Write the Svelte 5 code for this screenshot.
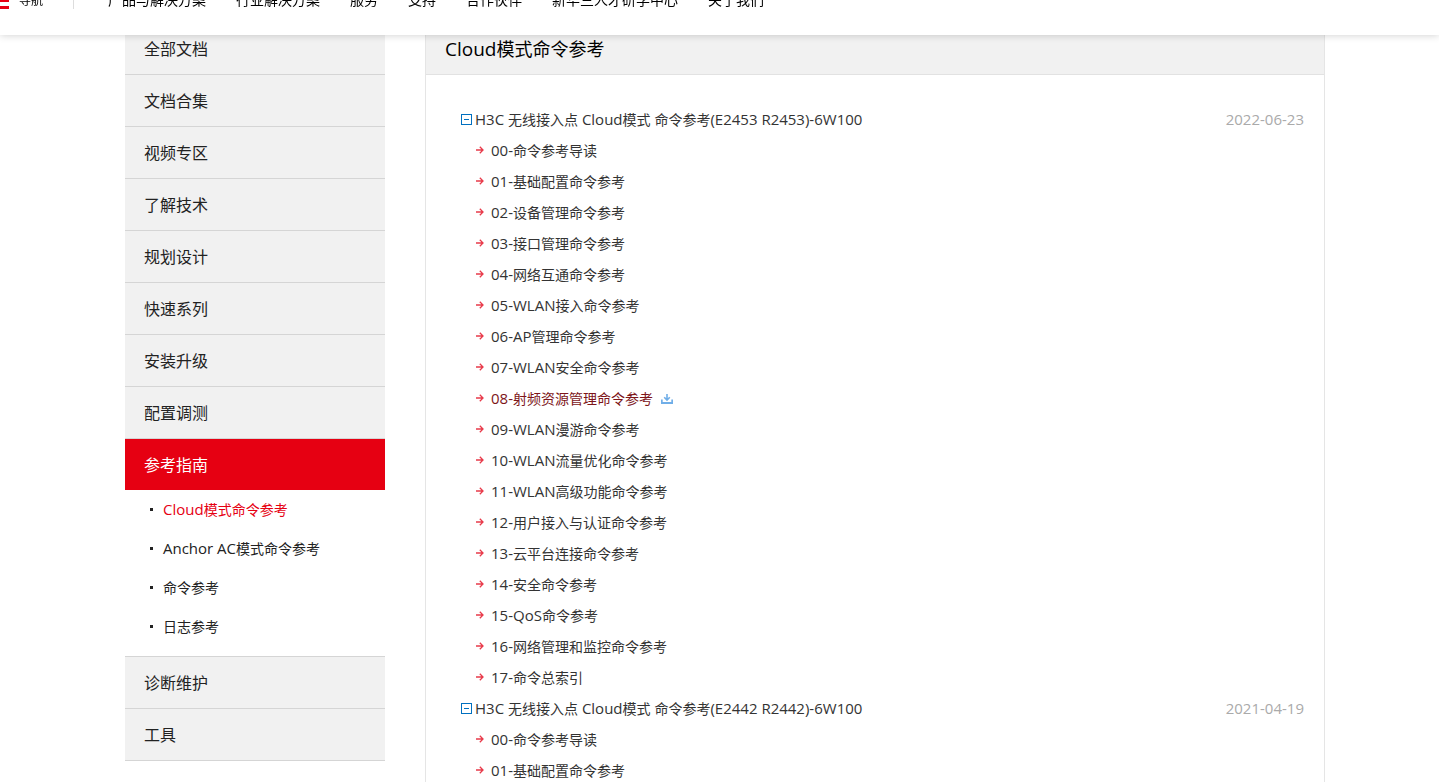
<script>
  const nav = ['产品与解决方案', '行业解决方案', '服务', '支持', '合作伙伴', '新华三人才研学中心', '关于我们'];

  const before = ['全部文档', '文档合集', '视频专区', '了解技术', '规划设计', '快速系列', '安装升级', '配置调测'];
  const sub = ['Cloud模式命令参考', 'Anchor AC模式命令参考', '命令参考', '日志参考'];
  const after = ['诊断维护', '工具'];

  const groups = $state([
    {
      title: 'H3C 无线接入点 Cloud模式 命令参考(E2453 R2453)-6W100',
      date: '2022-06-23',
      open: true,
      items: [
        '00-命令参考导读',
        '01-基础配置命令参考',
        '02-设备管理命令参考',
        '03-接口管理命令参考',
        '04-网络互通命令参考',
        '05-WLAN接入命令参考',
        '06-AP管理命令参考',
        '07-WLAN安全命令参考',
        '08-射频资源管理命令参考',
        '09-WLAN漫游命令参考',
        '10-WLAN流量优化命令参考',
        '11-WLAN高级功能命令参考',
        '12-用户接入与认证命令参考',
        '13-云平台连接命令参考',
        '14-安全命令参考',
        '15-QoS命令参考',
        '16-网络管理和监控命令参考',
        '17-命令总索引'
      ],
      active: 8
    },
    {
      title: 'H3C 无线接入点 Cloud模式 命令参考(E2442 R2442)-6W100',
      date: '2021-04-19',
      open: true,
      items: ['00-命令参考导读', '01-基础配置命令参考'],
      active: -1
    }
  ]);

  // Splits a label into Chinese and Latin runs, so that Latin can be set a size larger.
  const runs = (text) =>
    text.match(/[\u4e00-\u9fff]+|[^\u4e00-\u9fff]+/g).map((part) => ({ part, latin: part.charCodeAt(0) < 256 }));
</script>

{#snippet mixed(text)}{#each runs(text) as run}{#if run.latin}<span class="latin">{run.part}</span>{:else}{run.part}{/if}{/each}{/snippet}

<div class="page">
  <header>
    <button class="menu">
      <svg width="18" height="17" viewBox="0 0 18 17" aria-hidden="true">
        <path d="M0 1.5h18M0 8.5h18M0 15.5h18" stroke="#e60012" stroke-width="3" />
      </svg>
      导航
    </button>
    <nav>
      {#each nav as label}
        <a href="#top">{label}</a>
      {/each}
    </nav>
  </header>

  <div class="layout">
    <aside>
      <ul class="side">
        {#each before as label}
          <li><a class="entry" href="#top">{label}</a></li>
        {/each}
        <li>
          <a class="entry current" href="#top">参考指南</a>
          <ul class="sub">
            {#each sub as label, i}
              <li><a href="#top" class:on={i === 0}>{@render mixed(label)}</a></li>
            {/each}
          </ul>
        </li>
        {#each after as label}
          <li><a class="entry" href="#top">{label}</a></li>
        {/each}
      </ul>
    </aside>

    <main>
      <h1>{@render mixed('Cloud模式命令参考')}</h1>
      <div class="docs">
        {#each groups as group}
          <section>
            <div class="row head">
              <button class="toggle" aria-label={group.title} aria-expanded={group.open} onclick={() => (group.open = !group.open)}>
                <svg width="11" height="11" viewBox="0 0 11 11" shape-rendering="crispEdges">
                  <path d="M.5.5h10v10h-10zM3 5.5h5" fill="none" stroke="#0070c0" />
                  {#if !group.open}<path d="M5.5 3v5" stroke="#0070c0" />{/if}
                </svg>
              </button>
              <a href="#top">{@render mixed(group.title)}</a>
              <time class="latin">{group.date}</time>
            </div>
            {#if group.open}
              <ul>
                {#each group.items as item, i}
                  <li class="row item">
                    <svg width="8" height="9" viewBox="0 0 8 9" aria-hidden="true">
                      <path d="M0 4h7M3.8 .8l3.2 3.2L3.8 7.2" fill="none" stroke="#e83a4a" stroke-width="1.3" />
                    </svg>
                    <a href="#top" class:visited={i === group.active}>{@render mixed(item)}</a>
                    {#if i === group.active}
                      <button class="download" aria-label="下载">
                        <svg width="12" height="10" viewBox="0 0 12 10">
                          <path d="M6 0v5.5M3.2 3.2L6 6l2.8-2.8" fill="none" stroke="#70aee8" stroke-width="1.6" />
                          <path d="M.8 5.5V9h10.4V5.5" fill="none" stroke="#70aee8" stroke-width="1.8" />
                        </svg>
                      </button>
                    {/if}
                  </li>
                {/each}
              </ul>
            {/if}
          </section>
        {/each}
      </div>
    </main>
  </div>
</div>

<style>
  :global(body) {
    margin: 0;
    background: #fff;
  }
  .page {
    height: 100vh;
    overflow: hidden;
    font-family: 'Open Sans', 'Noto Sans CJK SC', sans-serif;
    font-size: 14px;
    color: #222;
  }
  a {
    color: inherit;
    text-decoration: none;
  }
  ul {
    list-style: none;
    margin: 0;
    padding: 0;
  }
  button {
    border: 0;
    padding: 0;
    background: none;
    font: inherit;
    color: inherit;
    cursor: pointer;
  }
  svg {
    display: block;
    flex: none;
  }
  header {
    position: fixed;
    top: -37px;
    left: 0;
    right: 0;
    z-index: 2;
    display: flex;
    align-items: center;
    height: 72px;
    background: #fff;
    box-shadow: 0 0 8px rgba(0, 0, 0, 0.2);
    color: #000;
    white-space: nowrap;
  }
  .menu {
    display: flex;
    align-items: center;
    gap: 10px;
    margin-left: -9px;
    padding: 3px 30px 0 0;
    border-right: 1px solid #ddd;
    font-size: 12px;
    line-height: 16px;
  }
  nav {
    display: flex;
    gap: 30px;
    padding-left: 34px;
  }
  .layout {
    display: flex;
    align-items: stretch;
    gap: 40px;
    min-height: 100vh;
    box-sizing: border-box;
    padding: 23px 114px 0 125px;
  }
  aside {
    flex: 0 0 260px;
  }
  .entry {
    display: block;
    padding: 2px 0 0 19px;
    background: #f1f1f1;
    border-bottom: 1px solid #d5d5d5;
    font-size: 16px;
    line-height: 49px;
  }
  .entry.current {
    border-bottom: 0;
    background: #e60012;
    color: #fff;
  }
  .sub {
    padding: 0 0 10px 25px;
    border-bottom: 1px solid #d5d5d5;
    line-height: 39px;
  }
  .sub li {
    display: flex;
    align-items: center;
    gap: 10px;
  }
  .sub li::before {
    content: '';
    width: 3px;
    height: 3px;
    background: #222;
  }
  .on {
    color: #e60012;
  }
  main {
    flex: 1;
    min-width: 0;
    border: 1px solid #e5e5e5;
    border-width: 0 1px;
  }
  .latin {
    font-size: 15px;
    line-height: 1;
  }
  h1 {
    margin: 0;
    padding: 2px 0 0 19px;
    background: #f1f1f1;
    border-bottom: 1px solid #e2e2e2;
    color: #000;
    font-size: 18px;
    font-weight: 400;
    line-height: 49px;
  }
  h1 .latin {
    font-size: 19px;
  }
  .docs {
    padding: 29px 20px 0 35px;
    color: #333;
  }
  .row {
    display: flex;
    align-items: center;
    line-height: 31px;
  }
  .head {
    gap: 3px;
  }
  .item {
    gap: 7px;
    padding-left: 15px;
  }
  .download {
    margin-left: 1px;
  }
  time {
    margin-left: auto;
    color: #aaa;
  }
  .visited {
    color: #7d1519;
  }
</style>
